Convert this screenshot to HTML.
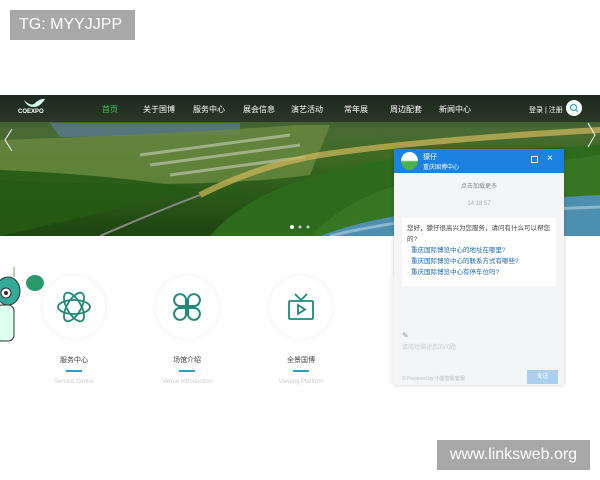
<!DOCTYPE html>
<html><head><meta charset="utf-8"><style>
*{margin:0;padding:0;box-sizing:border-box}
body{width:600px;height:480px;background:#fff;position:relative;overflow:hidden;font-family:"Liberation Sans","Noto Sans CJK SC",sans-serif}
.tag{position:absolute;left:10px;top:10px;width:125px;height:30px;background:#a8a8a8;color:#fff;font-size:16px;line-height:30px;padding-left:9px}
.tag2{position:absolute;left:437px;top:440px;width:153px;height:30px;background:#a8a8a8;color:#fff;font-size:16px;line-height:30px;text-align:center}
.banner{position:absolute;left:0;top:95px;width:600px;height:141px;overflow:hidden;
background:linear-gradient(180deg,#2b3a2a 0%,#4a6a34 25%,#3c6a22 45%,#2a5a18 70%,#1e4410 100%)}
.nav{position:absolute;left:0;top:0;width:600px;height:27px;background:rgba(20,25,25,.55)}
.nav span{position:absolute;top:9px;font-size:8px;color:#fff}
.chat{position:absolute;left:394px;top:149px;width:170px;height:236px;background:#f4f5f7;box-shadow:0 0 4px rgba(0,0,0,.2)}
.ch{height:24px;background:#1a82e0;color:#fff;position:relative}
.feat{position:absolute;text-align:center;width:100px}
.circ{width:62px;height:62px;border-radius:50%;margin:0 auto;background:#fff;box-shadow:0 0 8px rgba(0,0,0,.06);display:flex;align-items:center;justify-content:center}
.ft{font-size:7px;color:#444;margin-top:17px}
.ln{width:16px;height:1.5px;background:#2aa0c8;margin:5px auto 0}
.en{font-size:6px;color:#ccc;margin-top:7px}
</style></head><body>
<div class="tag">TG: MYYJJPP</div>
<div class="banner">
 <svg width="600" height="141" style="position:absolute;left:0;top:0">
  <path d="M50 28 L240 28 L240 40 L60 42Z" fill="#5a7890" opacity=".8"/>
  <path d="M0 45 Q150 40 300 30 L330 30 L310 80 Q200 95 0 85Z" fill="#6a8a40" opacity=".8"/>
  <path d="M140 60 L290 40 M150 70 L300 50 M170 80 L305 62" stroke="#c8d0c0" stroke-width="3" opacity=".6"/>
  <path d="M0 75 Q120 80 200 95 L0 141Z" fill="#255a14" opacity=".9"/>
  <path d="M200 100 Q260 70 320 60 Q420 45 600 35" stroke="#c9b45a" stroke-width="6" fill="none" opacity=".75"/>
  <path d="M100 141 Q160 115 200 100" stroke="#888" stroke-width="2" fill="none"/>
  <path d="M210 141 Q260 80 420 60 L600 50 L600 141Z" fill="#2e6a1c"/>
  <path d="M310 141 Q360 90 450 80 L600 60 L600 141Z" fill="#3a7a24" opacity=".7"/>
  <path d="M320 141 Q400 110 600 100 L600 141Z" fill="#4d8fb0"/>
  <path d="M330 141 Q420 118 600 112" stroke="#8ab8cc" stroke-width="3" fill="none"/>
  <circle cx="292" cy="132" r="2" fill="#fff"/><circle cx="300" cy="132" r="1.5" fill="#ccc"/><circle cx="308" cy="132" r="1.5" fill="#ccc"/>
  <path d="M12 34 L5 45 L12 56" stroke="#fff" fill="none"/><path d="M588 28 L595 40 L588 52" stroke="#fff" fill="none"/>
 </svg>
 <div class="nav">
  <svg width="24" height="10" style="position:absolute;left:22px;top:3px"><path d="M2 2Q8 8 12 6Q18 0 23 1Q18 9 12 9Q5 9 2 2Z" fill="#cfe"/></svg>
  <div style="position:absolute;left:18px;top:14px;color:#fff;font-size:6px;font-weight:bold">COEXPO</div>
  <span style="left:102px;color:#4cc44c">首页</span><span style="left:143px">关于国博</span><span style="left:193px">服务中心</span><span style="left:243px">展会信息</span><span style="left:291px">演艺活动</span><span style="left:344px">常年展</span><span style="left:390px">周边配套</span><span style="left:439px">新闻中心</span><span style="left:529px;font-size:7px;top:10px">登录 | 注册</span>
  <div style="position:absolute;left:566px;top:5px;width:16px;height:16px;border-radius:50%;background:#fff"><svg width="16" height="16"><circle cx="7.5" cy="7.5" r="3" stroke="#2aa0c8" fill="none" stroke-width="1.2"/><path d="M9.7 9.7l2 2" stroke="#2aa0c8" stroke-width="1.2"/></svg></div>
 </div>
</div>
<div class="chat">
 <div class="ch">
  <div style="position:absolute;left:7px;top:3px;width:17px;height:18px;border-radius:50%;background:linear-gradient(#fff 45%,#4cb04c 55%)"></div>
  <div style="position:absolute;left:29px;top:3px;font-size:7px">獴仔</div>
  <div style="position:absolute;left:29px;top:13px;font-size:6px">重庆国博中心</div>
  <div style="position:absolute;left:137px;top:7px;width:7px;height:7px;border:1px solid #fff"></div>
  <div style="position:absolute;left:153px;top:4px;font-size:10px">×</div>
 </div>
 <div style="text-align:center;font-size:6px;color:#888;margin-top:8px">点击加载更多</div>
 <div style="text-align:center;font-size:6px;color:#aaa;margin-top:11px">14:18:57</div>
 <div style="margin:11px 8px 0;background:#fff;height:68px;padding:5px;font-size:6.5px;line-height:11px;color:#444">您好，獴仔很高兴为您服务，请问有什么可以帮您的?<div style="color:#1a6bb8">· 重庆国际博览中心的地址在哪里?<br>· 重庆国际博览中心的联系方式有哪些?<br>· 重庆国际博览中心有停车位吗?</div></div>
 <div style="position:absolute;left:8px;top:182px;font-size:8px;color:#999">✎</div>
 <div style="position:absolute;left:8px;top:193px;font-size:6px;color:#ccc">请简短描述您的问题</div>
 <div style="position:absolute;left:8px;top:226px;font-size:5px;color:#bbb">© Powered by 小能智能客服</div>
 <div style="position:absolute;left:133px;top:221px;width:31px;height:14px;background:#a9d0ee;color:#fff;font-size:6px;text-align:center;line-height:14px">发送</div>
</div>
<div class="feat" style="left:24px;top:276px"><div class="circ"><svg width="36" height="36" viewBox="0 0 36 36" fill="none" stroke="#1f8a7a" stroke-width="1.8"><ellipse cx="18" cy="18" rx="16" ry="7"/><ellipse cx="18" cy="18" rx="16" ry="7" transform="rotate(60 18 18)"/><ellipse cx="18" cy="18" rx="16" ry="7" transform="rotate(120 18 18)"/></svg></div><div class="ft">服务中心</div><div class="ln"></div><div class="en">Service Centre</div></div>
<div class="feat" style="left:137px;top:276px"><div class="circ"><svg width="32" height="32" viewBox="0 0 32 32" fill="none" stroke="#1f8a7a" stroke-width="2"><path d="M15 15H8a6 6 0 1 1 7-7z"/><path d="M17 15h7a6 6 0 1 0-7-7z"/><path d="M15 17H8a6 6 0 1 0 7 7z"/><path d="M17 17h7a6 6 0 1 1-7 7z"/></svg></div><div class="ft">场馆介绍</div><div class="ln"></div><div class="en">Venue Introduction</div></div>
<div class="feat" style="left:251px;top:276px"><div class="circ"><svg width="30" height="30" viewBox="0 0 30 30" fill="none" stroke="#1f8a7a" stroke-width="1.8"><rect x="3" y="9" width="24" height="18" rx="1"/><path d="M9 2l6 6 6-6M12 13v9l7-4.5z"/></svg></div><div class="ft">全景国博</div><div class="ln"></div><div class="en">Viewing Platform</div></div>
<div style="position:absolute;left:388px;top:276px;width:6px;height:108px;background:linear-gradient(90deg,#fff,#f0f0f0)"></div>
<svg width="50" height="80" style="position:absolute;left:0;top:265px"><path d="M14 2v10" stroke="#6a6" /><ellipse cx="8" cy="26" rx="12" ry="14" fill="#3a9" stroke="#333"/><circle cx="6" cy="28" r="5" fill="#fff" stroke="#333"/><circle cx="6" cy="28" r="2" fill="#333"/><rect x="-4" y="40" width="18" height="36" rx="6" fill="#dfe" stroke="#333"/><ellipse cx="35" cy="18" rx="9" ry="8" fill="#2a9a6a"/></svg>
<div class="tag2">www.linksweb.org</div>
</body></html>
